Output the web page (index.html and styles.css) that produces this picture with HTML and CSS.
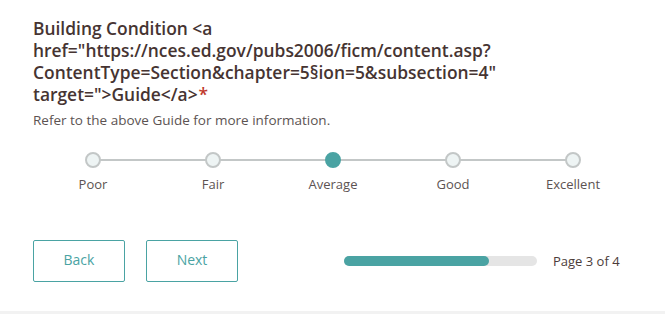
FILE: index.html
```html
<!DOCTYPE html>
<html lang="en">
<head>
  <meta charset="UTF-8" />
  <title>Survey</title>
  <link rel="stylesheet" href="styles.css">
</head>
<body>
  <div class="page">
    <div class="question">
      <div class="question-label">Building Condition &lt;a href="https://nces.ed.gov/pubs2006/ficm/content.asp?ContentType=Section&amp;chapter=5§ion=5&amp;subsection=4" target="&gt;Guide&lt;/a&gt;<span class="required">*</span></div>
      <div class="question-hint">Refer to the above Guide for more information.</div>

      <div class="rating">
        <div class="rating-item">
          <span class="dot"></span>
          <span class="rating-label">Poor</span>
        </div>
        <div class="rating-item">
          <span class="dot"></span>
          <span class="rating-label">Fair</span>
        </div>
        <div class="rating-item">
          <span class="dot selected"></span>
          <span class="rating-label">Average</span>
        </div>
        <div class="rating-item">
          <span class="dot"></span>
          <span class="rating-label">Good</span>
        </div>
        <div class="rating-item">
          <span class="dot"></span>
          <span class="rating-label">Excellent</span>
        </div>
      </div>
    </div>

    <div class="footer">
      <button class="nav-btn">Back</button>
      <button class="nav-btn">Next</button>
      <div class="progress">
        <div class="progress-bar"><div class="progress-fill"></div></div>
        <span class="progress-text">Page 3 of 4</span>
      </div>
    </div>
  </div>
  <div class="bottom-band"></div>
</body>
</html>
```

FILE: styles.css
```css
body {
  margin: 0;
  font-family: "Open Sans", Lato, sans-serif;
  background-color: #fff;
  color: #4c3c3a;
}

.page {
  padding: 17px 33px 0 33px;
  height: 311px;
  box-sizing: border-box;
}

.question-label {
  width: 600px;
  font-size: 17.4px;
  font-weight: 600;
  line-height: 22px;
  color: #463432;
}

.required {
  margin-left: 1px;
  color: #c0392b;
}

.question-hint {
  margin-top: 6px;
  font-size: 13.5px;
  line-height: 18px;
  color: #5c5352;
}

.rating {
  display: flex;
  width: 600px;
  margin-top: 23px;
}

.rating-item {
  position: relative;
  width: 120px;
  display: flex;
  flex-direction: column;
  align-items: center;
}

.rating-item::before {
  content: "";
  position: absolute;
  top: 7px;
  left: 0;
  right: 0;
  height: 2px;
  background: #c3c7c7;
}

.rating-item:first-child::before {
  left: 50%;
}

.rating-item:last-child::before {
  right: 50%;
}

.dot {
  position: relative;
  box-sizing: border-box;
  width: 16px;
  height: 16px;
  border-radius: 50%;
  border: 2px solid #c3c7c7;
  background: #eef4f4;
}

.dot.selected {
  border-color: #4aa3a3;
  background: #4aa3a3;
}

.rating-label {
  margin-top: 7px;
  font-size: 13px;
  line-height: 18px;
  color: #5c5352;
}

.footer {
  display: flex;
  align-items: center;
  margin-top: 47px;
}

.nav-btn {
  width: 92px;
  height: 42px;
  margin-right: 21px;
  padding: 0 0 3px 0;
  background: #fff;
  border: 1px solid #4aa3a3;
  border-radius: 2px;
  color: #4aa3a3;
  font-family: "Open Sans", Lato, sans-serif;
  font-size: 14px;
}

.progress {
  display: flex;
  align-items: center;
  margin-left: 85px;
}

.progress-bar {
  width: 193px;
  height: 10px;
  border-radius: 5px;
  background: #e5e5e5;
}

.progress-fill {
  width: 145px;
  height: 10px;
  border-radius: 5px;
  background: #4aa3a3;
}

.progress-text {
  margin-left: 16px;
  font-size: 13px;
  color: #4c3c3a;
}

.bottom-band {
  height: 3px;
  background: #f2f2f2;
}
```
